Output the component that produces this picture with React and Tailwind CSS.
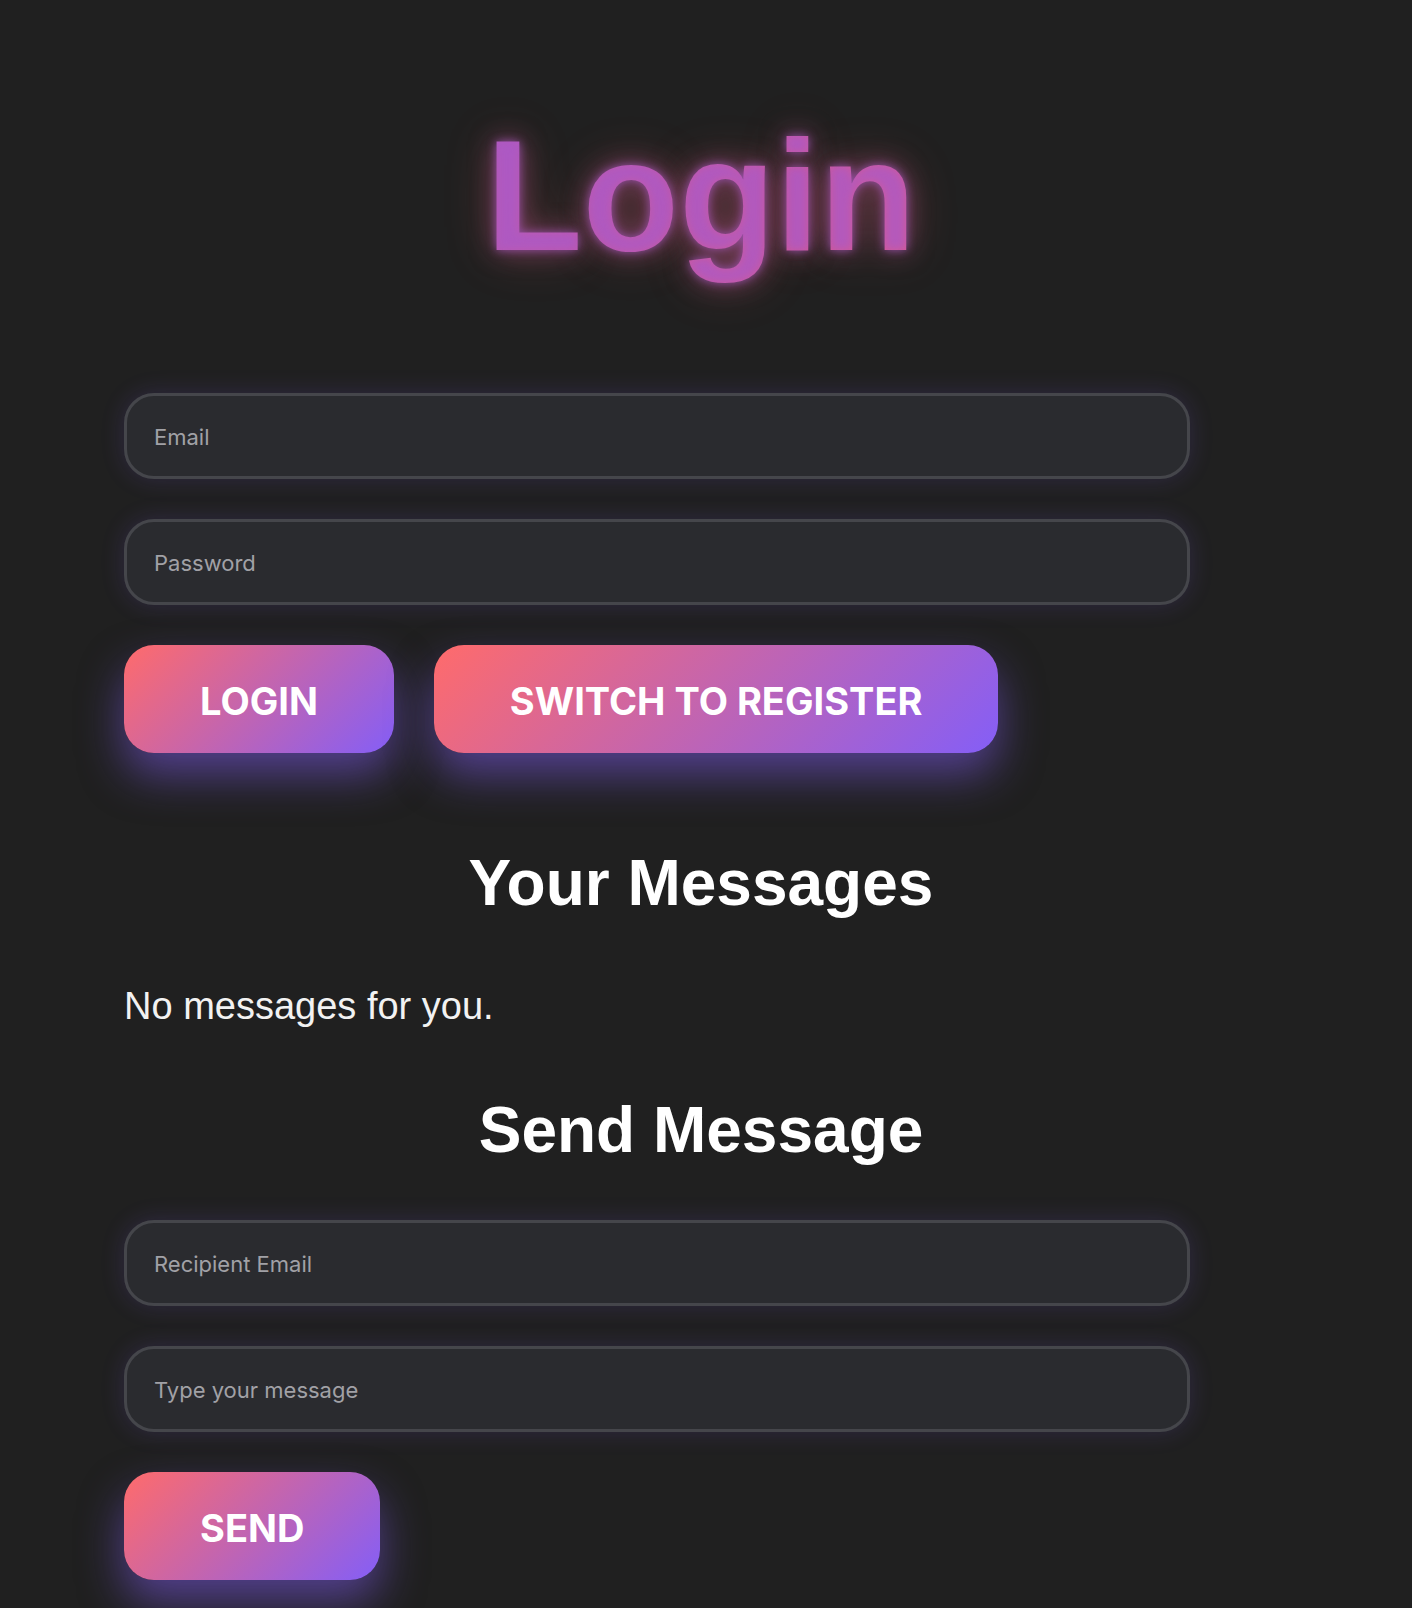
import { useState } from 'react';

const inputClass =
  "block w-[1066px] h-[86px] rounded-[30px] border-[3px] border-[#45464b] bg-[#2a2b2f] px-[27px] pt-[3px] text-[22px] text-white outline-none font-['Inter',sans-serif] placeholder:text-[#a1a1a6] shadow-[0_0_24px_rgba(132,94,247,0.16)]";

const buttonClass =
  "h-[108px] px-[76px] pt-[5px] rounded-[30px] bg-[linear-gradient(135deg,#ff6b6b,#845ef7)] text-white text-[38px] font-bold uppercase font-['Inter',sans-serif] shadow-[0_22px_44px_rgba(132,94,247,0.5)]";

const headingClass =
  "text-center text-[64px] leading-[1.15] font-bold text-white font-['Liberation_Sans',Arial,sans-serif]";

const App = () => {
  const [email, setEmail] = useState('');
  const [password, setPassword] = useState('');
  const [recipient, setRecipient] = useState('');
  const [message, setMessage] = useState('');
  const [messages] = useState([]);

  return (
    <div className="min-h-screen bg-[#202020] pl-[124px] pr-[134px] pt-[105px] pb-[30px] font-['Liberation_Sans',Arial,sans-serif]">
      <h1 className="text-center text-[158px] leading-[1.15] font-bold">
        <span className="inline-block bg-[linear-gradient(135deg,#a659cc,#de5a8e)] bg-clip-text text-transparent [text-shadow:0_0_10px_rgba(170,90,200,0.75),0_0_26px_rgba(200,90,160,0.5),0_0_50px_rgba(255,107,107,0.3)]">
          Login
        </span>
      </h1>

      <div className="mt-[106px] flex flex-col gap-[40px]">
        <input
          type="email"
          placeholder="Email"
          value={email}
          onChange={(e) => setEmail(e.target.value)}
          className={inputClass}
        />
        <input
          type="password"
          placeholder="Password"
          value={password}
          onChange={(e) => setPassword(e.target.value)}
          className={inputClass}
        />
        <div className="flex gap-[40px]">
          <button className={buttonClass}>Login</button>
          <button className={buttonClass}>Switch to Register</button>
        </div>
      </div>

      <h2 className={`${headingClass} mt-[94px]`}>Your Messages</h2>
      {messages.length === 0 ? (
        <p className="mt-[65px] text-[38px] leading-[1.15] text-[#f2f2f2]">No messages for you.</p>
      ) : (
        messages.map((m, i) => <p key={i}>{m}</p>)
      )}

      <h2 className={`${headingClass} mt-[65px]`}>Send Message</h2>
      <div className="mt-[52px] flex flex-col gap-[40px]">
        <input
          type="email"
          placeholder="Recipient Email"
          value={recipient}
          onChange={(e) => setRecipient(e.target.value)}
          className={inputClass}
        />
        <input
          type="text"
          placeholder="Type your message"
          value={message}
          onChange={(e) => setMessage(e.target.value)}
          className={inputClass}
        />
        <div className="flex">
          <button className={buttonClass}>Send</button>
        </div>
      </div>
    </div>
  );
};

export default App;
